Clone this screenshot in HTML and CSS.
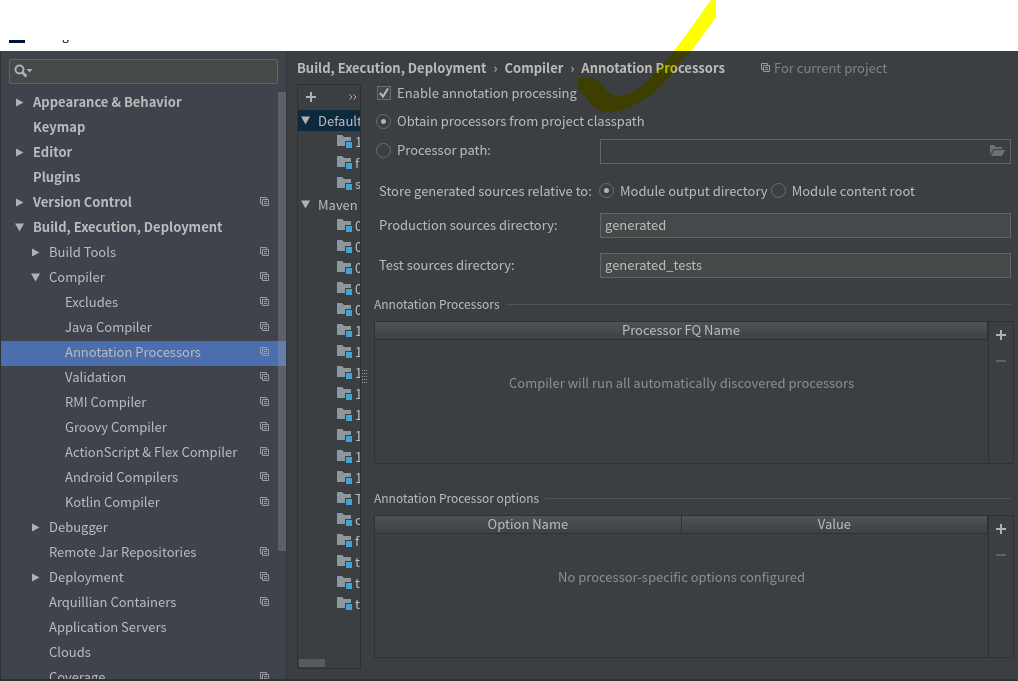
FILE: index.html
```html
<!DOCTYPE html>
<html lang="en">
<head>
<meta charset="utf-8">
<title>Settings</title>
<link rel="stylesheet" href="styles.css">
</head>
<body>
<svg class="sprite" aria-hidden="true">
  <symbol id="copy" viewBox="0 0 10 10"><path d="M2.5 6.5h-2v-6h6v2M2.5 2.5h6v6h-6zM4 4.500h3M4 6.500h3" fill="none" stroke="currentColor"/></symbol>
  <symbol id="right" viewBox="0 0 9 9"><path d="M1 0.5l7.5 4-7.5 4z" fill="currentColor"/></symbol>
  <symbol id="down" viewBox="0 0 9 9"><path d="M0 0.5h9l-4.500 8z" fill="currentColor"/></symbol>
  <symbol id="module" viewBox="0 0 16 14"><path d="M0 0h5l2 2h7v9H0z" fill="#8e979d"/><path d="M8 6h8v8H8z" fill="#3c3f41"/><path d="M9 7h6v6H9z" fill="#40a5cf"/></symbol>
  <symbol id="plus" viewBox="0 0 10 10"><path d="M5 0v10M0 5h10" stroke="currentColor" stroke-width="2"/></symbol>
  <symbol id="minus" viewBox="0 0 10 10"><path d="M0 5h10" stroke="currentColor" stroke-width="2"/></symbol>
</svg>
<div class="window">
  <header class="titlebar">
    <div class="titlebar-clip"><span class="app-icon"></span><span class="title">Settings</span></div>
  </header>
  <div class="body">
    <aside class="sidebar">
      <label class="search">
        <svg width="19" height="14" viewBox="0 0 19 14"><circle cx="5.500" cy="5.500" r="4" fill="none" stroke="#afb1b3" stroke-width="2"/><path d="M8.500 8.500l4 4" stroke="#afb1b3" stroke-width="2.500"/><path d="M12.500 5h6l-3 3.500z" fill="#afb1b3"/></svg>
        <input type="text" aria-label="Search settings">
      </label>
      <nav class="tree">
        <ul>
          <li class="l0"><svg class="arrow"><use href="#right"/></svg><span>Appearance &amp; Behavior</span></li>
          <li class="l0"><i class="arrow"></i><span>Keymap</span></li>
          <li class="l0"><svg class="arrow"><use href="#right"/></svg><span>Editor</span></li>
          <li class="l0"><i class="arrow"></i><span>Plugins</span></li>
          <li class="l0"><svg class="arrow"><use href="#right"/></svg><span>Version Control</span><svg class="copy"><use href="#copy"/></svg></li>
          <li class="l0"><svg class="arrow"><use href="#down"/></svg><span>Build, Execution, Deployment</span></li>
          <li class="l1"><svg class="arrow"><use href="#right"/></svg><span>Build Tools</span><svg class="copy"><use href="#copy"/></svg></li>
          <li class="l1"><svg class="arrow"><use href="#down"/></svg><span>Compiler</span><svg class="copy"><use href="#copy"/></svg></li>
          <li class="l2"><span>Excludes</span><svg class="copy"><use href="#copy"/></svg></li>
          <li class="l2"><span>Java Compiler</span><svg class="copy"><use href="#copy"/></svg></li>
          <li class="l2 selected"><span>Annotation Processors</span><svg class="copy"><use href="#copy"/></svg></li>
          <li class="l2"><span>Validation</span><svg class="copy"><use href="#copy"/></svg></li>
          <li class="l2"><span>RMI Compiler</span><svg class="copy"><use href="#copy"/></svg></li>
          <li class="l2"><span>Groovy Compiler</span><svg class="copy"><use href="#copy"/></svg></li>
          <li class="l2"><span>ActionScript &amp; Flex Compiler</span><svg class="copy"><use href="#copy"/></svg></li>
          <li class="l2"><span>Android Compilers</span><svg class="copy"><use href="#copy"/></svg></li>
          <li class="l2"><span>Kotlin Compiler</span><svg class="copy"><use href="#copy"/></svg></li>
          <li class="l1"><svg class="arrow"><use href="#right"/></svg><span>Debugger</span></li>
          <li class="l1"><i class="arrow"></i><span>Remote Jar Repositories</span><svg class="copy"><use href="#copy"/></svg></li>
          <li class="l1"><svg class="arrow"><use href="#right"/></svg><span>Deployment</span><svg class="copy"><use href="#copy"/></svg></li>
          <li class="l1"><i class="arrow"></i><span>Arquillian Containers</span><svg class="copy"><use href="#copy"/></svg></li>
          <li class="l1"><i class="arrow"></i><span>Application Servers</span></li>
          <li class="l1"><i class="arrow"></i><span>Clouds</span></li>
          <li class="l1"><i class="arrow"></i><span>Coverage</span><svg class="copy"><use href="#copy"/></svg></li>
        </ul>
        <div class="scrollbar"></div>
      </nav>
    </aside>
    <main class="main">
      <div class="crumbs">
        <b>Build, Execution, Deployment</b><span class="sep">›</span><b>Compiler</b><span class="sep">›</span><b>Annotation Processors</b>
        <span class="scope"><svg class="copy"><use href="#copy"/></svg>For current project</span>
      </div>
      <div class="panes">
        <section class="profiles">
          <div class="tools">
            <button type="button" aria-label="Add profile"><svg class="glyph"><use href="#plus"/></svg></button>
            <button type="button" aria-label="More"><svg width="8" height="6" viewBox="0 0 8 6"><path d="M0.500 0.500L3 3 .5 5.500M4.500 .5L7 3 4.500 5.500" fill="none" stroke="#afb1b3"/></svg></button>
          </div>
          <ul class="modules">
            <li class="group current"><svg class="arrow"><use href="#down"/></svg>Default</li>
            <li><svg class="module"><use href="#module"/></svg>1</li>
            <li><svg class="module"><use href="#module"/></svg>f</li>
            <li><svg class="module"><use href="#module"/></svg>s</li>
            <li class="group"><svg class="arrow"><use href="#down"/></svg>Maven</li>
            <li><svg class="module"><use href="#module"/></svg>0</li>
            <li><svg class="module"><use href="#module"/></svg>0</li>
            <li><svg class="module"><use href="#module"/></svg>0</li>
            <li><svg class="module"><use href="#module"/></svg>0</li>
            <li><svg class="module"><use href="#module"/></svg>0</li>
            <li><svg class="module"><use href="#module"/></svg>1</li>
            <li><svg class="module"><use href="#module"/></svg>1</li>
            <li><svg class="module"><use href="#module"/></svg>1</li>
            <li><svg class="module"><use href="#module"/></svg>1</li>
            <li><svg class="module"><use href="#module"/></svg>1</li>
            <li><svg class="module"><use href="#module"/></svg>1</li>
            <li><svg class="module"><use href="#module"/></svg>1</li>
            <li><svg class="module"><use href="#module"/></svg>1</li>
            <li><svg class="module"><use href="#module"/></svg>T</li>
            <li><svg class="module"><use href="#module"/></svg>c</li>
            <li><svg class="module"><use href="#module"/></svg>f</li>
            <li><svg class="module"><use href="#module"/></svg>t</li>
            <li><svg class="module"><use href="#module"/></svg>t</li>
            <li><svg class="module"><use href="#module"/></svg>t</li>
          </ul>
          <div class="hscroll"></div>
        </section>
        <div class="splitter"></div>
        <form class="form">
          <label class="row enable"><input type="checkbox" checked>Enable annotation processing</label>
          <label class="row obtain"><input type="radio" name="source" checked>Obtain processors from project classpath</label>
          <div class="row path">
            <label class="name"><input type="radio" name="source">Processor path:</label>
            <div class="field empty"><input type="text" aria-label="Processor path"><svg width="15" height="11" viewBox="0 0 15 11"><path d="M0 10V0h4l1.500 2H12v2H3.500L0 10z" fill="#6e7173"/><path d="M4 5h11l-3 6H1z" fill="#6e7173"/></svg></div>
          </div>
          <div class="row store">
            <span class="name">Store generated sources relative to:</span>
            <label><input type="radio" name="rel" checked>Module output directory</label>
            <label><input type="radio" name="rel">Module content root</label>
          </div>
          <div class="row"><label class="name" for="prod">Production sources directory:</label><div class="field"><input id="prod" type="text" value="generated"></div></div>
          <div class="row test"><label class="name" for="test">Test sources directory:</label><div class="field"><input id="test" type="text" value="generated_tests"></div></div>
          <section class="group-box">
            <h2>Annotation Processors</h2>
            <div class="grid">
              <div class="grid-body">
                <table><thead><tr><th>Processor FQ Name</th></tr></thead></table>
                <p>Compiler will run all automatically discovered processors</p>
              </div>
              <div class="side">
                <button type="button" aria-label="Add processor"><svg class="glyph"><use href="#plus"/></svg></button>
                <button type="button" aria-label="Remove processor" disabled><svg class="glyph"><use href="#minus"/></svg></button>
              </div>
            </div>
          </section>
          <section class="group-box">
            <h2>Annotation Processor options</h2>
            <div class="grid">
              <div class="grid-body">
                <table><thead><tr><th>Option Name</th><th>Value</th></tr></thead></table>
                <p>No processor-specific options configured</p>
              </div>
              <div class="side">
                <button type="button" aria-label="Add option"><svg class="glyph"><use href="#plus"/></svg></button>
                <button type="button" aria-label="Remove option" disabled><svg class="glyph"><use href="#minus"/></svg></button>
              </div>
            </div>
          </section>
        </form>
      </div>
    </main>
  </div>
  <svg class="marker" width="140" height="114" viewBox="0 0 140 114"><path d="M133 0L138 0V17L114 50L101 63L88 81L77 92L65 100L53 107L41 111L25 112L16 108L6 96L0 88V78L14 77L23 83L30 92L38 96L50 94L63 87L76 74L88 61L96 51L104 40L108 35Z" fill="#ff0"/></svg>
</div>
</body>
</html>
```

FILE: styles.css
```css
* { box-sizing: border-box; }
body {
  margin: 0;
  background: #fff;
  color: #bbb;
  font: 13px/20px "Noto Sans CJK SC", "Noto Sans", sans-serif;
}
ul, h2, p { margin: 0; padding: 0; list-style: none; font-weight: normal; }
svg { display: block; flex: none; }
input, button { font: inherit; color: inherit; margin: 0; padding: 0; border: 0; background: none; }
.sprite { position: absolute; width: 0; height: 0; }
.window { position: relative; display: flex; flex-direction: column; height: 100vh; overflow: hidden; }

.titlebar { display: flex; align-items: flex-end; flex: none; height: 51px; }
.titlebar-clip { display: flex; align-items: flex-end; gap: 4px; height: 11px; padding: 0 0 8px 9px; overflow: hidden; color: #000; }
.app-icon { width: 16px; height: 16px; background: #001436; }
.title { font-size: 12px; line-height: 16px; }

.body { display: flex; flex: 1; min-height: 0; border-left: 1px solid #2f3235; border-bottom: 2px solid #2f3234; background: #3c3f41; }
.sidebar { display: flex; flex-direction: column; flex: none; width: 286px; padding-top: 8px; background: #3e434c; border-right: 1px solid #33363a; }
.search { display: flex; align-items: center; flex: none; height: 25px; margin: 0 8px 7px; padding: 0 0 2px 4px; border: 1px solid #646464; border-radius: 2px; background: #45494a; }
.search input { flex: 1; min-width: 0; outline: 0; }
.tree { position: relative; flex: 1; min-height: 0; overflow: hidden; }
.tree li { display: flex; align-items: center; height: 25px; padding: 0 16px 3px 0; white-space: nowrap; }
.tree .arrow { width: 9px; height: 9px; margin-right: 9px; color: #afb1b3; flex: none; }
.tree span { flex: 1; }
.tree .l0 { padding-left: 14px; font-weight: 700; }
.tree .l1 { padding-left: 30px; }
.tree .l2 { padding-left: 64px; }
.tree .selected { background: #4b6eaf; }
.copy { width: 10px; height: 10px; color: #9a9da0; }
.scrollbar { position: absolute; top: 1px; right: 0; width: 8px; height: 459px; background: rgba(166, 166, 166, .3); }

.main { display: flex; flex-direction: column; flex: 1; min-width: 0; padding: 6px 4px 10px 10px; }
.crumbs { display: flex; align-items: center; flex: none; height: 22px; margin-bottom: 5px; padding-bottom: 1px; white-space: nowrap; }
.crumbs .sep { width: 18px; text-align: center; }
.scope { display: flex; align-items: center; gap: 3px; margin-left: 36px; color: #808284; }
.panes { display: flex; flex: 1; min-height: 0; }

.profiles { display: flex; flex-direction: column; flex: none; width: 64px; border: 1px solid #2f3234; overflow: hidden; }
.tools { display: flex; align-items: center; justify-content: space-between; flex: none; height: 25px; padding: 0 3px 2px 8px; }
.glyph { width: 10px; height: 10px; color: #afb1b3; }
.modules { flex: 1; min-height: 0; }
.modules li { display: flex; align-items: center; gap: 2px; height: 21px; padding-left: 39px; white-space: nowrap; }
.modules .group { gap: 8px; padding-left: 3px; }
.modules .current { background: #0d293e; }
.modules .arrow { width: 9px; height: 9px; color: #afb1b3; }
.module { width: 16px; height: 14px; }
.hscroll { flex: none; width: 26px; height: 8px; margin: 0 0 1px 1px; background: #585a5c; }
.splitter { flex: none; align-self: center; width: 5px; height: 14px; margin: 0 7px 0 1px; background: conic-gradient(from 270deg at 1px 1px, #999 90deg, transparent 0) 0 0 / 2px 3px; }

.form { flex: 1; min-width: 0; display: flex; flex-direction: column; }
.row { display: flex; align-items: center; flex: none; height: 25px; padding: 0 3px 0 5px; white-space: nowrap; }
.row label { display: flex; align-items: center; }
.row .name { flex: none; width: 221px; padding-bottom: 2px; }
input[type="checkbox"], input[type="radio"] { appearance: none; flex: none; width: 15px; height: 15px; border: 1px solid #6b6e70; }
input[type="checkbox"] { width: 14px; height: 14px; margin: 0 6px 0 1px; background: #43474a url("data:image/svg+xml,%3Csvg xmlns='http://www.w3.org/2000/svg' viewBox='0 0 12 12'%3E%3Cpath d='M2 6l3 3.500L10 1.500' fill='none' stroke='%23bbb' stroke-width='2'/%3E%3C/svg%3E"); }
input[type="radio"] { margin-right: 6px; border-radius: 50%; }
input[type="radio"]:checked { background: radial-gradient(circle, #afb1b3 0 2px, transparent 3px); }
.enable { height: 20px; padding-left: 2px; padding-bottom: 2px; }
.obtain { height: 34px; padding-left: 2px; }
.path { height: 26px; padding-left: 2px; }
.path .name { width: 224px; }
.store { height: 49px; padding-top: 4px; }
.store .name { width: 220px; padding-bottom: 0; }
.store label { margin-right: 3px; }
.test { margin-top: 15px; }
.field { display: flex; align-items: center; flex: 1; min-width: 0; height: 25px; padding: 0 5px 2px 4px; border: 1px solid #646464; background: #45494a; }
.field.empty { background: none; }
.field input { flex: 1; min-width: 0; outline: 0; }

.group-box { flex: none; margin-top: 17px; }
.group-box + .group-box { margin-top: 25px; }
.group-box h2 { display: flex; align-items: center; gap: 6px; height: 18px; margin-bottom: 8px; padding-right: 3px; font-size: 12px; }
.group-box h2::after { content: ""; flex: 1; height: 1px; background: #515456; }
.grid { display: flex; height: 143px; border: 1px solid #2f3234; }
.grid-body { flex: 1; min-width: 0; }
.grid table { width: 100%; border-collapse: collapse; table-layout: fixed; }
.grid th { height: 17px; padding: 0; border-bottom: 1px solid #2f3234; border-right: 1px solid #2f3234; background: linear-gradient(#505356, #3e4143); font-weight: normal; line-height: 16px; }
.grid th + th { border-left: 1px solid #606366; }
.grid p { padding-top: 33px; text-align: center; color: #8c8e90; }
.side { display: flex; flex-direction: column; align-items: center; gap: 16px; flex: none; width: 25px; padding-top: 8px; border-left: 1px solid #2f3234; }
button:disabled .glyph { color: #606365; }
.marker { position: absolute; top: 0; left: 578px; mix-blend-mode: multiply; pointer-events: none; }
```
